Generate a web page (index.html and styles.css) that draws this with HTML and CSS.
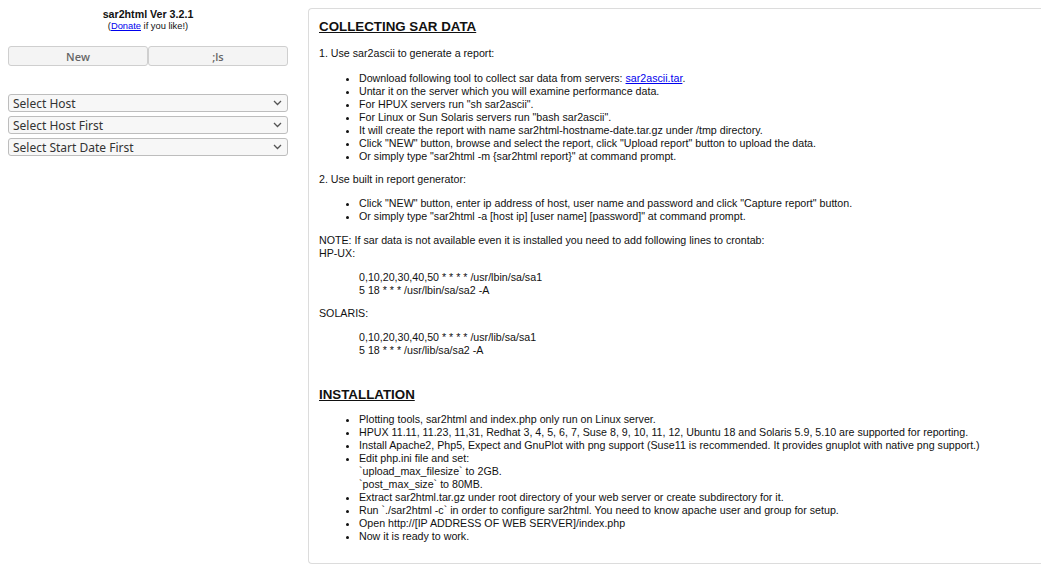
FILE: index.html
```html
<!DOCTYPE html>
<html>
<head>
<meta charset="utf-8">
<title>sar2html</title>
<link rel="stylesheet" href="styles.css">
</head>
<body>
<div class="page">
  <aside class="sidebar">
    <div class="brand">
      <div class="brand-title">sar2html Ver 3.2.1</div>
      <div class="brand-sub">(<a href="#">Donate</a> if you like!)</div>
    </div>
    <div class="btn-row">
      <button class="btn">New</button>
      <button class="btn">;ls</button>
    </div>
    <div class="selects">
      <div class="sel-wrap">
        <select class="sel"><option>Select Host</option></select>
        <svg class="chev" width="9" height="6" viewBox="0 0 9 6"><path d="M1 1 L4.5 4.5 L8 1" fill="none" stroke="#555" stroke-width="1.3"/></svg>
      </div>
      <div class="sel-wrap">
        <select class="sel"><option>Select Host First</option></select>
        <svg class="chev" width="9" height="6" viewBox="0 0 9 6"><path d="M1 1 L4.5 4.5 L8 1" fill="none" stroke="#555" stroke-width="1.3"/></svg>
      </div>
      <div class="sel-wrap">
        <select class="sel"><option>Select Start Date First</option></select>
        <svg class="chev" width="9" height="6" viewBox="0 0 9 6"><path d="M1 1 L4.5 4.5 L8 1" fill="none" stroke="#555" stroke-width="1.3"/></svg>
      </div>
    </div>
  </aside>
  <main class="panel">
    <h2 class="heading">COLLECTING SAR DATA</h2>
    <p class="para">1. Use sar2ascii to generate a report:</p>
    <ul class="list list-first">
      <li>Download following tool to collect sar data from servers: <a href="#">sar2ascii.tar</a>.</li>
      <li>Untar it on the server which you will examine performance data.</li>
      <li>For HPUX servers run "sh sar2ascii".</li>
      <li>For Linux or Sun Solaris servers run "bash sar2ascii".</li>
      <li>It will create the report with name sar2html-hostname-date.tar.gz under /tmp directory.</li>
      <li>Click "NEW" button, browse and select the report, click "Upload report" button to upload the data.</li>
      <li>Or simply type "sar2html -m {sar2html report}" at command prompt.</li>
    </ul>
    <p class="para para-tight">2. Use built in report generator:</p>
    <ul class="list">
      <li>Click "NEW" button, enter ip address of host, user name and password and click "Capture report" button.</li>
      <li>Or simply type "sar2html -a [host ip] [user name] [password]" at command prompt.</li>
    </ul>
    <p class="para">NOTE: If sar data is not available even it is installed you need to add following lines to crontab:<br>HP-UX:</p>
    <div class="code code-first">0,10,20,30,40,50 * * * * /usr/lbin/sa/sa1<br>5 18 * * * /usr/lbin/sa/sa2 -A</div>
    <p class="para para-after-code">SOLARIS:</p>
    <div class="code">0,10,20,30,40,50 * * * * /usr/lib/sa/sa1<br>5 18 * * * /usr/lib/sa/sa2 -A</div>
    <h2 class="heading heading-second">INSTALLATION</h2>
    <ul class="list list-install">
      <li>Plotting tools, sar2html and index.php only run on Linux server.</li>
      <li>HPUX 11.11, 11.23, 11,31, Redhat 3, 4, 5, 6, 7, Suse 8, 9, 10, 11, 12, Ubuntu 18 and Solaris 5.9, 5.10 are supported for reporting.</li>
      <li>Install Apache2, Php5, Expect and GnuPlot with png support (Suse11 is recommended. It provides gnuplot with native png support.)</li>
      <li>Edit php.ini file and set:<br>`upload_max_filesize` to 2GB.<br>`post_max_size` to 80MB.</li>
      <li>Extract sar2html.tar.gz under root directory of your web server or create subdirectory for it.</li>
      <li>Run `./sar2html -c` in order to configure sar2html. You need to know apache user and group for setup.</li>
      <li>Open http://[IP ADDRESS OF WEB SERVER]/index.php</li>
      <li>Now it is ready to work.</li>
    </ul>
  </main>
</div>
</body>
</html>
```

FILE: styles.css
```css
html, body {
  margin: 0;
  padding: 0;
  background: #fff;
}
body {
  font-family: "Liberation Sans", Arial, sans-serif;
  color: #111;
  overflow: hidden;
}
a {
  color: #0000ee;
  text-decoration: underline;
}
.page {
  display: flex;
  align-items: flex-start;
  padding: 8px 0 0 8px;
  gap: 20px;
}
.sidebar {
  width: 280px;
  flex: 0 0 280px;
}
.brand {
  text-align: center;
}
.brand-title {
  font-size: 8pt;
  font-weight: bold;
  line-height: 12px;
}
.brand-sub {
  font-size: 7pt;
  line-height: 12px;
}
.btn-row {
  display: flex;
  margin-top: 14px;
}
.btn {
  flex: 1;
  height: 20px;
  margin: 0;
  padding: 0;
  border: 1px solid #cfcfcf;
  border-radius: 3px;
  background: #f4f4f4;
  color: #666;
  font-family: "Open Sans", "DejaVu Sans", sans-serif;
  font-size: 11px;
  font-weight: 600;
}
.selects {
  display: flex;
  flex-direction: column;
  gap: 4px;
  margin-top: 28px;
}
.sel-wrap {
  position: relative;
}
.sel {
  display: block;
  width: 280px;
  height: 18px;
  margin: 0;
  padding: 1px 0 0 4px;
  border: 1px solid #bdbdbd;
  border-radius: 3px;
  background: #f7f7f7;
  color: #333;
  font-family: "Noto Sans", "Open Sans", sans-serif;
  font-size: 12px;
  line-height: 15px;
  -webkit-appearance: none;
  appearance: none;
}
.chev {
  position: absolute;
  right: 6px;
  top: 6px;
  pointer-events: none;
}
.panel {
  flex: 1;
  min-width: 740px;
  box-sizing: border-box;
  border: 1px solid #dcdcdc;
  border-right: none;
  border-radius: 4px 0 0 4px;
  padding: 10px 10px 9px 10px;
  font-size: 8pt;
  line-height: 13px;
}
.heading {
  margin: 0 0 12px;
  font-size: 10pt;
  line-height: 16px;
  font-weight: bold;
  text-decoration: underline;
}
.heading-second {
  margin-top: 30px;
  margin-bottom: 10px;
}
.para {
  margin: 11px 0;
}
.heading + .para {
  margin-top: 12px;
}
.para-tight {
  margin-top: 10px;
}
.list {
  margin: 11px 0;
  padding-left: 40px;
}
.list-first {
  margin-top: 12px;
  margin-bottom: 10px;
}
.heading + .list {
  margin-top: 10px;
}
.code {
  margin: 11px 0 11px 40px;
}
.code-first {
  margin-top: 9px;
  margin-bottom: 10px;
}
.para-after-code {
  margin-top: 10px;
}
```
